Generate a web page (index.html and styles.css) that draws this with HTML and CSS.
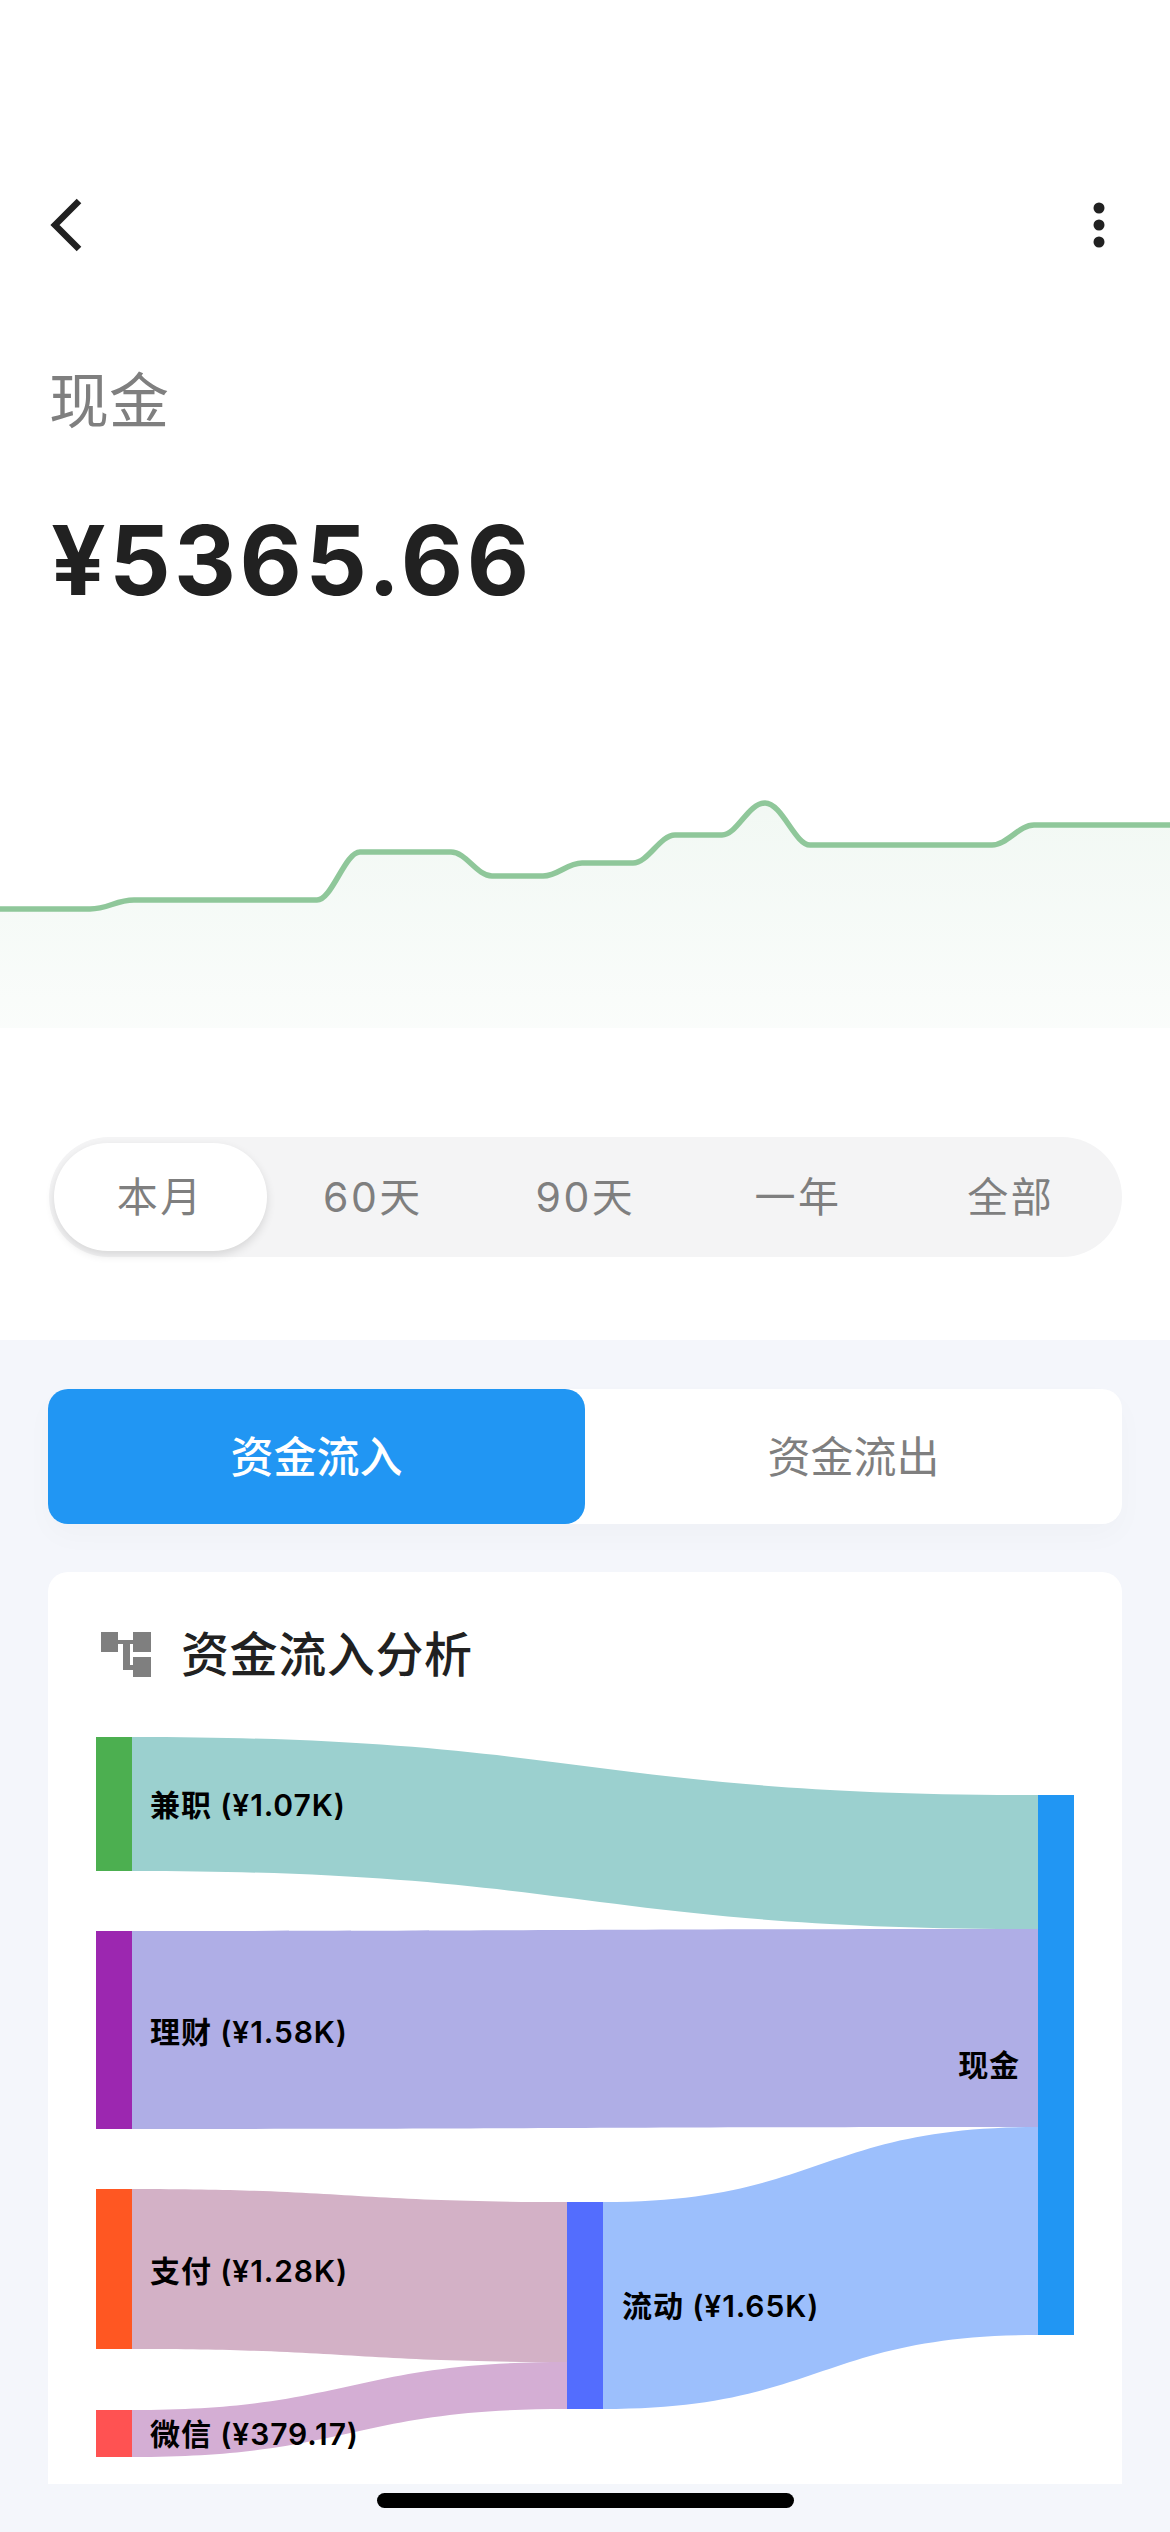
FILE: index.html
```html
<!DOCTYPE html>
<html>
<head>
	<title>现金</title>
	<meta charset="utf-8">
	<link rel="stylesheet" href="styles.css">
</head>
<body>
	<div class="top">
		<div class="nav">
			<svg class="back" width="40" height="60" viewBox="0 0 40 60">
				<path d="M31 6 L7 30 L31 54" fill="none" stroke="#212121" stroke-width="6.5"/>
			</svg>
			<svg class="more" width="12" height="50" viewBox="0 0 12 50">
				<circle cx="6" cy="8" r="5.5" fill="#212121"/>
				<circle cx="6" cy="25" r="5.5" fill="#212121"/>
				<circle cx="6" cy="42" r="5.5" fill="#212121"/>
			</svg>
		</div>
		<div class="name">现金</div>
		<div class="amount">¥5365.66</div>
		<svg class="trend" width="1170" height="268" viewBox="0 760 1170 268">
			<defs>
				<linearGradient id="fade" x1="0" y1="0" x2="0" y2="1">
					<stop offset="0" stop-color="#3f9a5c" stop-opacity="0.07"/>
					<stop offset="1" stop-color="#3f9a5c" stop-opacity="0.025"/>
				</linearGradient>
			</defs>
			<path fill="url(#fade)" d="M0 909 L90 909 C108 909 116 900 134 900 L317 900 C332 900 345 852 360 852 L451 852 C466 852 477 876 492 876 L543 876 C558 876 567 863 582 863 L633 863 C648 863 660 835 675 835 L722 835 C737 835 748 803 765 803 C782 803 795 845 810 845 L992 845 C1007 845 1019 825 1034 825 L1170 825 L1170 1028 L0 1028 Z"/>
			<path fill="none" stroke="#8fc79a" stroke-width="5.5" d="M0 909 L90 909 C108 909 116 900 134 900 L317 900 C332 900 345 852 360 852 L451 852 C466 852 477 876 492 876 L543 876 C558 876 567 863 582 863 L633 863 C648 863 660 835 675 835 L722 835 C737 835 748 803 765 803 C782 803 795 845 810 845 L992 845 C1007 845 1019 825 1034 825 L1170 825"/>
		</svg>
		<div class="range">
			<div class="range-item active">本月</div>
			<div class="range-item">60天</div>
			<div class="range-item">90天</div>
			<div class="range-item">一年</div>
			<div class="range-item">全部</div>
		</div>
	</div>
	<div class="bottom">
		<div class="toggle">
			<div class="toggle-item on">资金流入</div>
			<div class="toggle-item">资金流出</div>
		</div>
		<div class="card">
			<div class="card-title">
				<svg width="50" height="45" viewBox="0 0 50 45">
					<path fill="#7f7f7f" d="M0 0H17V8H32V0H50V20H32V12H29V33H32V25H50V45H32V38H22V12H17V20H0Z"/>
				</svg>
				<span>资金流入分析</span>
			</div>
			<svg class="sankey" width="1074" height="747" viewBox="48 1720 1074 747">
				<path fill="#9bd0cf" d="M132 1737 C585 1737 585 1795 1038 1795 L1038 1929 C585 1929 585 1871 132 1871 Z"/>
				<path fill="#afaee6" d="M132 1931 C585 1931 585 1929 1038 1929 L1038 2127 C585 2127 585 2129 132 2129 Z"/>
				<path fill="#d3b1c6" d="M132 2189 C350 2189 350 2202 567 2202 L567 2362 C350 2362 350 2349 132 2349 Z"/>
				<path fill="#d4aed4" d="M132 2410 C350 2410 350 2362 567 2362 L567 2409 C350 2409 350 2457 132 2457 Z"/>
				<path fill="#9cbffc" d="M603 2202 C820 2202 820 2127 1038 2127 L1038 2335 C820 2335 820 2409 603 2409 Z"/>
				<rect x="96" y="1737" width="36" height="134" fill="#4caf50"/>
				<rect x="96" y="1931" width="36" height="198" fill="#9c27b0"/>
				<rect x="96" y="2189" width="36" height="160" fill="#ff5722"/>
				<rect x="96" y="2410" width="36" height="47" fill="#ff5252"/>
				<rect x="567" y="2202" width="36" height="207" fill="#536dfe"/>
				<rect x="1038" y="1795" width="36" height="540" fill="#2196f3"/>
				<text class="label" x="150" y="1816">兼职 (¥1.07K)</text>
				<text class="label" x="150" y="2043">理财 (¥1.58K)</text>
				<text class="label" x="150" y="2282">支付 (¥1.28K)</text>
				<text class="label" x="150" y="2445">微信 (¥379.17)</text>
				<text class="label" x="622" y="2317">流动 (¥1.65K)</text>
				<text class="label" x="1020" y="2076" text-anchor="end">现金</text>
			</svg>
		</div>
	</div>
	<div class="home-bar"></div>
</body>
</html>
```

FILE: styles.css
```css
* {
	box-sizing: border-box;
}
html, body {
	margin: 0;
	padding: 0;
}
body {
	position: relative;
	width: 1170px;
	height: 2532px;
	overflow: hidden;
	background-color: #f4f6fb;
	font-family: Inter, "Noto Sans CJK SC", sans-serif;
}
.top {
	height: 1340px;
	padding-top: 195px;
	background-color: #fff;
}
.nav {
	display: flex;
	justify-content: space-between;
	align-items: center;
	height: 60px;
	padding: 0 65px 0 48px;
}
.name {
	margin: 110px 0 0 49px;
	font-size: 60px;
	line-height: 72px;
	color: #7f7f7f;
}
.amount {
	margin: 63px 0 0 51px;
	font-size: 96px;
	line-height: 120px;
	font-weight: bold;
	letter-spacing: 3.5px;
	color: #212121;
}
.trend {
	display: block;
	margin-top: 140px;
}
.range {
	display: flex;
	height: 120px;
	margin: 109px 48px 0 49px;
	padding: 6px 5px;
	border-radius: 60px;
	background-color: #f4f4f5;
}
.range-item {
	flex: 1;
	display: flex;
	justify-content: center;
	align-items: center;
	padding-bottom: 6px;
	font-size: 41px;
	letter-spacing: 2.5px;
	color: #7f7f7f;
}
.range-item.active {
	border-radius: 54px;
	background-color: #fff;
	box-shadow: 0 4px 10px rgba(0, 0, 0, 0.12);
}
.bottom {
	height: 1144px;
	padding: 49px 48px 0;
	overflow: hidden;
}
.toggle {
	display: flex;
	height: 135px;
	border-radius: 20px;
	background-color: #fff;
	box-shadow: 0 12px 30px rgba(0, 0, 0, 0.025);
}
.toggle-item {
	flex: 1;
	display: flex;
	justify-content: center;
	align-items: center;
	padding-bottom: 6px;
	border-radius: 20px;
	font-size: 43px;
	color: #7f7f7f;
}
.toggle-item.on {
	background-color: #2196f3;
	font-weight: 500;
	color: #fff;
}
.card {
	height: 960px;
	margin-top: 48px;
	border-radius: 20px 20px 0 0;
	background-color: #fff;
}
.card-title {
	display: flex;
	align-items: center;
	gap: 30px;
	height: 45px;
	padding-left: 53px;
	position: relative;
	top: 60px;
	line-height: 37px;
	font-size: 48px;
	font-weight: 500;
	letter-spacing: 0.6px;
	color: #212121;
}
.sankey {
	display: block;
	margin-top: 103px;
}
.label {
	font-size: 30px;
	font-weight: 600;
	letter-spacing: 0.9px;
	fill: #000;
}
.home-bar {
	position: absolute;
	left: 377px;
	top: 2493px;
	width: 417px;
	height: 15px;
	border-radius: 8px;
	background-color: #000;
}
```
